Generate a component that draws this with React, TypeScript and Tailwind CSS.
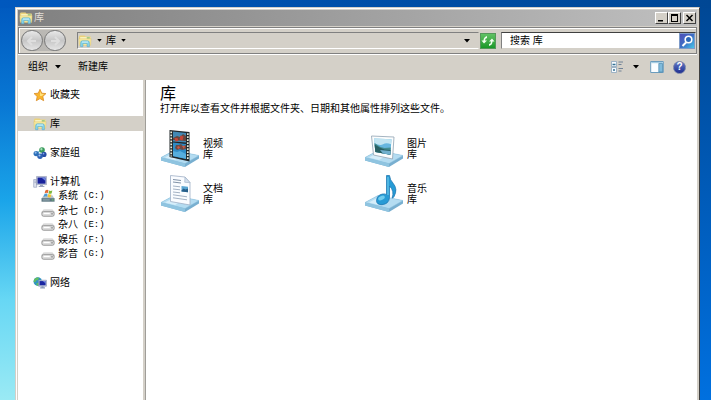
import React from 'react';

interface IconProps {
    className?: string;
}

const FolderIcon: React.FC<IconProps> = ({ className }) => (
    <svg viewBox="0 0 16 16" className={className} aria-hidden="true">
        <path d="M1 3.2 2 1.6h5.500l1 1.200H14.500v9H1z" fill="#ecd27a" />
        <path d="M2.500 3.600h11.500v7H2.500z" fill="#fbf7c8" />
        <path d="M10 3.800h3.500v1.600H10z" fill="#7cb96b" />
        <path d="M1 5.300h14l-.6 7.700H1.600z" fill="#f6e799" stroke="#dcc473" strokeWidth=".5" />
        <path d="M3 14.500V9.800Q3.100 7.800 5 7.800h6q1.900 0 2 2v4.700h-2.600v-3.700H5.600v3.700z" fill="#86d4ec" stroke="#4ea5c8" strokeWidth=".6" />
        <path d="M4.600 9.200h6.800" stroke="#e2f9fd" />
    </svg>
);

const StarIcon: React.FC<IconProps> = ({ className }) => (
    <svg viewBox="0 0 16 16" className={className} aria-hidden="true">
        <path d="m8 1.500 2 4.400 4.800.5-3.600 3.300 1 4.800L8 12.100l-4.200 2.400 1-4.800L1.200 6.400 6 5.900z" fill="#f9b52c" stroke="#d98a24" strokeWidth=".9" strokeLinejoin="round" />
        <path d="m8 3.600 1.300 3 3.300.4-2.500 2.100L8 9z" fill="#ffe07a" />
    </svg>
);

const HomegroupIcon: React.FC<IconProps> = ({ className }) => (
    <svg viewBox="0 0 16 16" className={className} aria-hidden="true">
        <path d="M5 8 10 4M5 9l5 4M11 5v7" stroke="#6fb7c9" strokeWidth="1.400" />
        <circle cx="3.600" cy="8.600" r="3" fill="#2b6fb8" />
        <circle cx="3" cy="7.600" r="1.200" fill="#8db8ea" />
        <circle cx="10.300" cy="4.600" r="3.200" fill="#3a9a5c" />
        <circle cx="9.600" cy="3.700" r="1.300" fill="#a4e0b8" />
        <circle cx="12.600" cy="9.600" r="2.900" fill="#274da5" />
        <circle cx="12" cy="8.700" r="1" fill="#7da5e4" />
        <circle cx="8" cy="11.800" r="3.100" fill="#2f62b4" />
        <circle cx="7.400" cy="10.900" r="1.200" fill="#9cc4ee" />
    </svg>
);

const ComputerIcon: React.FC<IconProps> = ({ className }) => (
    <svg viewBox="0 0 16 16" className={className} aria-hidden="true">
        <path d="M.8 5.200h3.400V14H.8z" fill="#dfe3ee" stroke="#8c98b5" strokeWidth=".7" />
        <path d="M1.600 7h2M1.600 8.700h2" stroke="#8c98b5" strokeWidth=".7" />
        <path d="M4 1.700h11.500v9.300H4z" fill="#c9cfdf" stroke="#8089a8" strokeWidth=".6" />
        <path d="M5.200 2.900h9.100v7H5.200z" fill="#18229c" />
        <path d="M9.500 2.900h4.800v4z" fill="#6d83dd" />
        <path d="M8 11h3.400v1.500H13v1.300H6.500v-1.300H8z" fill="#99a3bd" />
    </svg>
);

const SystemDriveIcon: React.FC<IconProps> = ({ className }) => (
    <svg viewBox="0 0 16 16" className={className} aria-hidden="true">
        <path d="M3 7h10l2.500 4H.6z" fill="#b8c4c9" />
        <path d="M.6 10.500h14.900v4H.6z" fill="#5c7680" />
        <path d="M2 12.500h8" stroke="#a9bcc3" />
        <path d="M12.300 12h2v1h-2z" fill="#72d26d" />
        <path d="M5 1.600q2-1.300 3.600-.2L7.800 4.700Q6 3.800 4.100 5z" fill="#e36a35" />
        <path d="M9.300 1.800q1.800.8 3.700-.2l-.9 3.500q-1.900.8-3.600-.1z" fill="#7eb83c" />
        <path d="M3.900 5.700q1.900-1.100 3.700-.2l-.8 3.200q-1.900-.8-3.800.3z" fill="#4d9ed7" />
        <path d="M8.300 5.800q1.800.9 3.600.2L11 9.400q-1.700.7-3.500-.2z" fill="#f4c434" />
    </svg>
);

const DriveIcon: React.FC<IconProps> = ({ className }) => (
    <svg viewBox="0 0 16 16" className={className} aria-hidden="true">
        <path d="M3.800 6.800h8.500q1 0 1.600.8l1.300 1.800H.9l1.300-1.800q.6-.8 1.600-.8z" fill="#e9e9e9" stroke="#b0b0b0" strokeWidth=".7" />
        <rect x="1" y="8.800" width="14" height="5.200" rx="1.800" fill="#dcdcdc" stroke="#858585" strokeWidth=".9" />
        <path d="M3 10.700h7" stroke="#fff" strokeWidth="1.400" />
        <path d="M11.700 11.300h1.800" stroke="#666" />
    </svg>
);

const NetworkIcon: React.FC<IconProps> = ({ className }) => (
    <svg viewBox="0 0 16 16" className={className} aria-hidden="true">
        <circle cx="5.500" cy="6.300" r="4.900" fill="#2d94c4" />
        <path d="M2.200 2.900Q4.500 1 7 2L5.800 4.500 3.500 5 2.400 7.500.8 6.700Q.7 4.500 2.200 2.900zM4 8l3 .4-1 2.600-1.700.1z" fill="#63bd5f" />
        <path d="M6.400 4.800h9v6.900h-9z" fill="#c8d0e2" stroke="#7783a8" strokeWidth=".6" />
        <path d="M7.400 5.800h7v4.800h-7z" fill="#1925a2" />
        <path d="M11.200 5.800h3.200v2.800z" fill="#768be2" />
        <path d="M9.700 11.700h2.400v1.200h1.600v1.300H8.200v-1.300h1.500z" fill="#8c9bb9" />
    </svg>
);

const Caret: React.FC<IconProps> = ({ className }) => (
    <svg viewBox="0 0 6 4" className={className} aria-hidden="true">
        <path d="M0 0h6L3 3.500z" fill="#000" />
    </svg>
);

// Shared glass tray that every library icon stands on
const Tray = () => (
    <>
        <path d="M1 28.500 14 21.500 39 26.500v3L25 38 1 31.500z" fill="#78afd0" />
        <path d="M1 28.500 14 21.500 39 26.500 25 34.500z" fill="#b4dcf1" stroke="#8fc3df" strokeWidth=".5" />
        <path d="M1 28.500 25 34.500V38L1 31.500z" fill="#8fc4e0" />
        <path d="M5 28.500 14 23.500l10 2-9 5.500z" fill="#d6eefa" />
    </>
);

const VideoIcon = () => (
    <svg viewBox="0 0 40 40" className="h-10 w-10 shrink-0" aria-hidden="true">
        <Tray />
        <path d="m9.500 1 20 2v29.500L9.500 28z" fill="#202629" />
        <path d="m13 2.500 13 1.500v9.500L13 12.500z" fill="#4389b4" />
        <path d="m13 13.500 13 1.500v15L13 27.200z" fill="#2f8cc6" />
        <path d="m13 9 4-2 3 1 3-3 3 2v5l-13-1z" fill="#66483f" />
        <path d="m14.500 9 3 0 1 3-3 .5zM20.500 6.500l3 1-1 4-3-1z" fill="#c64637" />
        <path d="m16 16 3 0 2-1 2 2 3-1v4l-4 1-2-1-3 1-2-2z" fill="#6c4a44" />
        <path d="m17 18 2-1 1 2-2 1zM22 17h3l-1 3z" fill="#d25a44" />
        <path d="m13 22 4 1 3-1 6 3v4.800L13 27z" fill="#56aedd" />
        <path d="M11.200 2.500v25" stroke="#eceedd" strokeWidth="1.700" strokeDasharray="1.700 1.300" />
        <path d="M27.800 4.200v27" stroke="#eceedd" strokeWidth="1.700" strokeDasharray="1.700 1.300" />
    </svg>
);

const DocumentIcon = () => (
    <svg viewBox="0 0 40 40" className="h-10 w-10 shrink-0" aria-hidden="true">
        <Tray />
        <path d="m10.500 1.500 14.500 1.500 5 5.500v22.500l-19.500-3.500z" fill="#fafcff" stroke="#9eafc5" strokeWidth=".8" />
        <path d="m25 3-.3 5.300 5.300.4z" fill="#d3dfed" stroke="#9eafc5" strokeWidth=".6" />
        <path d="m13 5.500 8 1M13 8l8 1" stroke="#72849c" strokeWidth=".9" />
        <path d="m13 12 7 .8m-7 2.200 7 .8m-7 2.200 7 .8m-7 2 14 2m-14 1 14 2" stroke="#9aa9bd" strokeWidth=".9" />
        <path d="m21.500 12 6.500.8v5.500l-6.500-.8z" fill="#5ba6d3" />
        <path d="m21.500 16.500 2-2 2 1 2.500-1v3.800l-6.500-.8z" fill="#285f8a" />
    </svg>
);

const PictureIcon = () => (
    <svg viewBox="0 0 40 40" className="h-10 w-10 shrink-0" aria-hidden="true">
        <Tray />
        <path d="m7.500 7 22.500 1-1.500 22L9.500 26z" fill="#fcfdfd" stroke="#9babba" strokeWidth=".9" />
        <path d="m10 9.500 17.500.8-1.200 15.500L11.300 23z" fill="#66b6df" />
        <path d="m10 9.500 17.500.8-.4 5q-5-2-8 0t-8.700-1z" fill="#c2e4f1" />
        <path d="m10.500 14 6 4 4 1 6.300-.5-.5 7.300L11.300 23z" fill="#438d91" />
        <path d="m10.600 15.500 5 3 5 2 5.900.5-.2 4.800L11.300 23z" fill="#285f63" />
        <path d="m16 21 10.500 1-.2 3.800L19 24.500z" fill="#71b0ce" />
    </svg>
);

const MusicIcon = () => (
    <svg viewBox="0 0 40 40" className="h-10 w-10 shrink-0" aria-hidden="true">
        <Tray />
        <path d="M22.500 1.500h3q.4 4.500 3.800 8 4.700 5.500.8 13-.8 1.500-2 1.500 2.500-7-2.600-12v11.500q-.5 6.500-7.500 7.200-5.500.2-5.500-4.200.5-5.500 6-6.500 2.500-.4 4 .5z" fill="#279bd5" stroke="#1670ac" strokeWidth=".7" />
        <path d="M24 3v18" stroke="#76d0ef" strokeWidth="1" />
        <ellipse cx="17.500" cy="24" rx="3.500" ry="2" fill="#70ccee" transform="rotate(-25 17.5 24)" />
    </svg>
);

const NAV_LINKS = [
    { icon: <StarIcon className="h-[14px] w-[14px]" />, label: '收藏夹', active: false },
    { icon: <FolderIcon className="h-[14px] w-[14px]" />, label: '库', active: true },
    { icon: <HomegroupIcon className="h-[14px] w-[14px]" />, label: '家庭组', active: false },
];

const DRIVES = [
    { icon: <SystemDriveIcon className="h-[14px] w-[14px]" />, name: '系统', letter: '(C:)' },
    { icon: <DriveIcon className="h-[14px] w-[14px]" />, name: '杂七', letter: '(D:)' },
    { icon: <DriveIcon className="h-[14px] w-[14px]" />, name: '杂八', letter: '(E:)' },
    { icon: <DriveIcon className="h-[14px] w-[14px]" />, name: '娱乐', letter: '(F:)' },
    { icon: <DriveIcon className="h-[14px] w-[14px]" />, name: '影音', letter: '(G:)' },
];

const LIBRARIES = [
    { icon: <VideoIcon />, name: '视频' },
    { icon: <PictureIcon />, name: '图片' },
    { icon: <DocumentIcon />, name: '文档' },
    { icon: <MusicIcon />, name: '音乐' },
];

interface NavItemProps {
    icon: React.ReactNode;
    label: string;
    active?: boolean;
}

const NavItem: React.FC<NavItemProps> = ({ icon, label, active }) => (
    <a href="#" className={`flex h-[15px] items-center gap-[3px] pl-[15px] ${active ? 'bg-[#d4d0c8]' : ''}`}>
        {icon}
        {label}
    </a>
);

const captionButton =
    'flex h-3 w-[13px] items-center justify-center border border-t-white border-l-white border-r-[#404040] border-b-[#404040] bg-[#d4d0c8]';

const TitleBar = () => (
    <div className="flex h-[16px] shrink-0 items-center bg-linear-to-r from-[#808080] to-[#c0c0c0] pr-px pl-px text-[#e2dfd8]">
        <FolderIcon className="mr-px h-[14px] w-[14px]" />
        <h1>库</h1>
        <div className="ml-auto flex">
            <button aria-label="最小化" className={captionButton}>
                <svg viewBox="0 0 9 8" className="h-2 w-[9px]"><path d="M1 6h5v1.500H1z" /></svg>
            </button>
            <button aria-label="最大化" className={captionButton}>
                <svg viewBox="0 0 9 8" className="h-2 w-[9px]"><path d="M1 0h7v8H1zM2 2v5h5V2z" fillRule="evenodd" /></svg>
            </button>
            <button aria-label="关闭" className={`${captionButton} ml-[2px]`}>
                <svg viewBox="0 0 9 8" className="h-2 w-[9px]"><path d="m1.500 1 6 6m0-6-6 6" stroke="#000" strokeWidth="1.500" /></svg>
            </button>
        </div>
    </div>
);

const AddressBar = () => (
    <div className="mt-px flex h-[27px] shrink-0 items-center border border-[#808080] pl-[2px] shadow-[inset_1px_1px_0_#fff,0_1px_0_#fff]">
        <div className="flex rounded-full bg-[#bab8b4]">
            <button aria-label="后退" className="flex h-[21px] w-[22px] items-center justify-center rounded-full border border-[#777] bg-linear-to-b from-[#e8e8e8] via-[#c6c6c6] to-[#e5e5e5]">
                <svg viewBox="0 0 14 14" className="h-[14px] w-[14px]"><path d="M7 3 3 7l4 4M3 7h8" fill="none" stroke="#dedede" strokeWidth="2" /></svg>
            </button>
            <button aria-label="前进" className="ml-px flex h-[21px] w-[22px] items-center justify-center rounded-full border border-[#777] bg-linear-to-b from-[#e8e8e8] via-[#c6c6c6] to-[#e5e5e5]">
                <svg viewBox="0 0 14 14" className="h-[14px] w-[14px]"><path d="m7 3 4 4-4 4m4-4H3" fill="none" stroke="#dedede" strokeWidth="2" /></svg>
            </button>
        </div>
        <div className="ml-[11px] flex h-[17px] min-w-0 flex-1 items-center border border-t-[#808080] border-l-[#808080] border-r-[#d4d0c8] border-b-white">
            <FolderIcon className="h-[14px] w-[14px]" />
            <button aria-label="位置" className="ml-[5px] flex"><Caret className="h-[3px] w-[5px]" /></button>
            <button className="ml-1 flex items-center gap-[5px] leading-none">
                库
                <Caret className="h-[3px] w-[5px]" />
            </button>
            <button aria-label="历史记录" className="mr-[8px] ml-auto flex"><Caret className="h-1 w-[6px]" /></button>
        </div>
        <button aria-label="刷新" className="ml-px h-4 w-4 shrink-0 border border-[#55985a] bg-linear-to-b from-[#5fc263] to-[#159827]">
            <svg viewBox="0 0 14 14" className="h-[14px] w-[14px]">
                <path d="M6 2v2Q4 4 4 6.500h2L3 9.500.5 6.500h2Q2.500 3 6 2zM8 12v-2q2 0 2-2.500H8l3-3 2.500 3h-2Q11.500 11 8 12z" fill="#f3fff1" />
            </svg>
        </button>
        <form role="search" className="ml-[5px] flex h-[17px] w-[195px] shrink items-center border border-t-[#404040] border-l-[#808080] border-r-[#d4d0c8] border-b-[#d4d0c8] bg-white">
            <input type="text" aria-label="搜索 库" placeholder="搜索 库" className="h-full min-w-0 flex-1 pl-2 outline-none placeholder:text-black" />
            <button type="button" aria-label="搜索" className="h-4 w-4 shrink-0 border border-[#7e9bc9] bg-linear-to-br from-[#4e50b8] via-[#3d6ec5] to-[#48c5e6]">
                <svg viewBox="0 0 14 14" className="h-[14px] w-[14px]">
                    <path d="M6 8.500 2.500 12" stroke="#fff" strokeWidth="2" />
                    <circle cx="8.500" cy="5.500" r="3.300" fill="#2c68b8" stroke="#fff" strokeWidth="1.600" />
                </svg>
            </button>
        </form>
    </div>
);

const Toolbar = () => (
    <div className="flex h-[26px] shrink-0 items-center pr-[11px] pl-[10px]">
        <button className="flex items-center gap-[7px]">
            组织
            <Caret className="h-1 w-[6px]" />
        </button>
        <button className="ml-[17px]">新建库</button>
        <button aria-label="更改视图" className="ml-auto">
            <svg viewBox="0 0 14 14" className="h-[14px] w-[14px]">
                <path d="M1.500 1.500h5v5h-5zM1.500 7.500h5v5h-5z" fill="#f6fbff" stroke="#8ba6bc" strokeWidth=".8" />
                <path d="M2.500 4.500h3M3 10h2" stroke="#347294" strokeWidth="1.500" />
                <path d="M8.500 2H13M8.500 4.500h3M8.500 8.500H13M8.500 11h3" stroke="#677b91" strokeWidth=".9" />
            </svg>
        </button>
        <button aria-label="更多选项" className="ml-[9px]"><Caret className="h-1 w-[6px]" /></button>
        <button aria-label="显示预览窗格" className="ml-[11px]">
            <svg viewBox="0 0 14 14" className="h-[14px] w-[14px]">
                <path d="M.7 1.500h12.600v11H.7z" fill="#fafdff" stroke="#6b9cbd" />
                <path d="M1.200 2h11.600v1.200H1.200z" fill="#a5cce2" />
                <path d="M8.800 3.500h3.700v8.500H8.800z" fill="#7fbadb" stroke="#4888ad" strokeWidth=".7" />
            </svg>
        </button>
        <button aria-label="帮助" className="ml-[9px] flex h-[13px] w-[13px] items-center justify-center rounded-full border border-[#7581a8] bg-linear-to-b from-[#6477c5] to-[#202e91] leading-none font-bold text-white">
            ?
        </button>
    </div>
);

const Sidebar = () => (
    <nav className="w-[127px] shrink-0 border-r-2 border-[#d4d0c8] bg-white pt-[7px]">
        <div className="flex flex-col gap-[14px]">
            {NAV_LINKS.map((item) => (
                <NavItem key={item.label} {...item} />
            ))}
            <div>
                <NavItem icon={<ComputerIcon className="h-[14px] w-[14px]" />} label="计算机" />
                <ul className="flex h-[72px] flex-col justify-between">
                    {DRIVES.map((drive) => (
                        <li key={drive.letter}>
                            <a href="#" className="flex h-[14px] items-center gap-[3px] pl-[23px]">
                                {drive.icon}
                                {drive.name}
                                <span className="ml-[2px] font-['Liberation_Mono'] text-[9px]">{drive.letter}</span>
                            </a>
                        </li>
                    ))}
                </ul>
            </div>
            <NavItem icon={<NetworkIcon className="h-[14px] w-[14px]" />} label="网络" />
        </div>
    </nav>
);

const LibraryPane = () => (
    <main className="min-w-0 flex-1 border-l border-[#a09e99] bg-white pt-[6px] pl-[14px]">
        <h2 className="text-[16px] leading-4">库</h2>
        <p>打开库以查看文件并根据文件夹、日期和其他属性排列这些文件。</p>
        <div className="mt-[13px] grid grid-cols-[204px_204px] gap-y-[5px]">
            {LIBRARIES.map((library) => (
                <a key={library.name} href="#" className="flex h-10 items-center gap-[3px]">
                    {library.icon}
                    <span className="leading-[11px]">
                        {library.name}
                        <br />库
                    </span>
                </a>
            ))}
        </div>
    </main>
);

export default function App() {
    return (
        <div className="flex h-screen flex-col overflow-hidden bg-[linear-gradient(to_right,#0058be,#004794),linear-gradient(to_bottom,#0058be,#0876d3_25%,#1aa4e9_50%,#67d7f4_75%,#9aeaf4),linear-gradient(to_bottom,#004794,#0070df)] bg-[size:100%_8px,50%_100%,100%_100%] bg-no-repeat font-['Liberation_Sans','Noto_Sans_CJK_SC',sans-serif] text-[10px] leading-[14px] text-black">
            <div className="mt-[7px] mr-[11px] ml-[15px] flex min-h-0 flex-1 flex-col border-t border-r border-l border-t-[#d4d0c8] border-r-[#404040] border-l-[#d4d0c8] bg-[#d4d0c8] px-[2px] pt-[2px] shadow-[inset_1px_1px_0_#fff]">
                <TitleBar />
                <AddressBar />
                <Toolbar />
                <div className="flex min-h-0 flex-1">
                    <Sidebar />
                    <LibraryPane />
                </div>
            </div>
        </div>
    );
}
